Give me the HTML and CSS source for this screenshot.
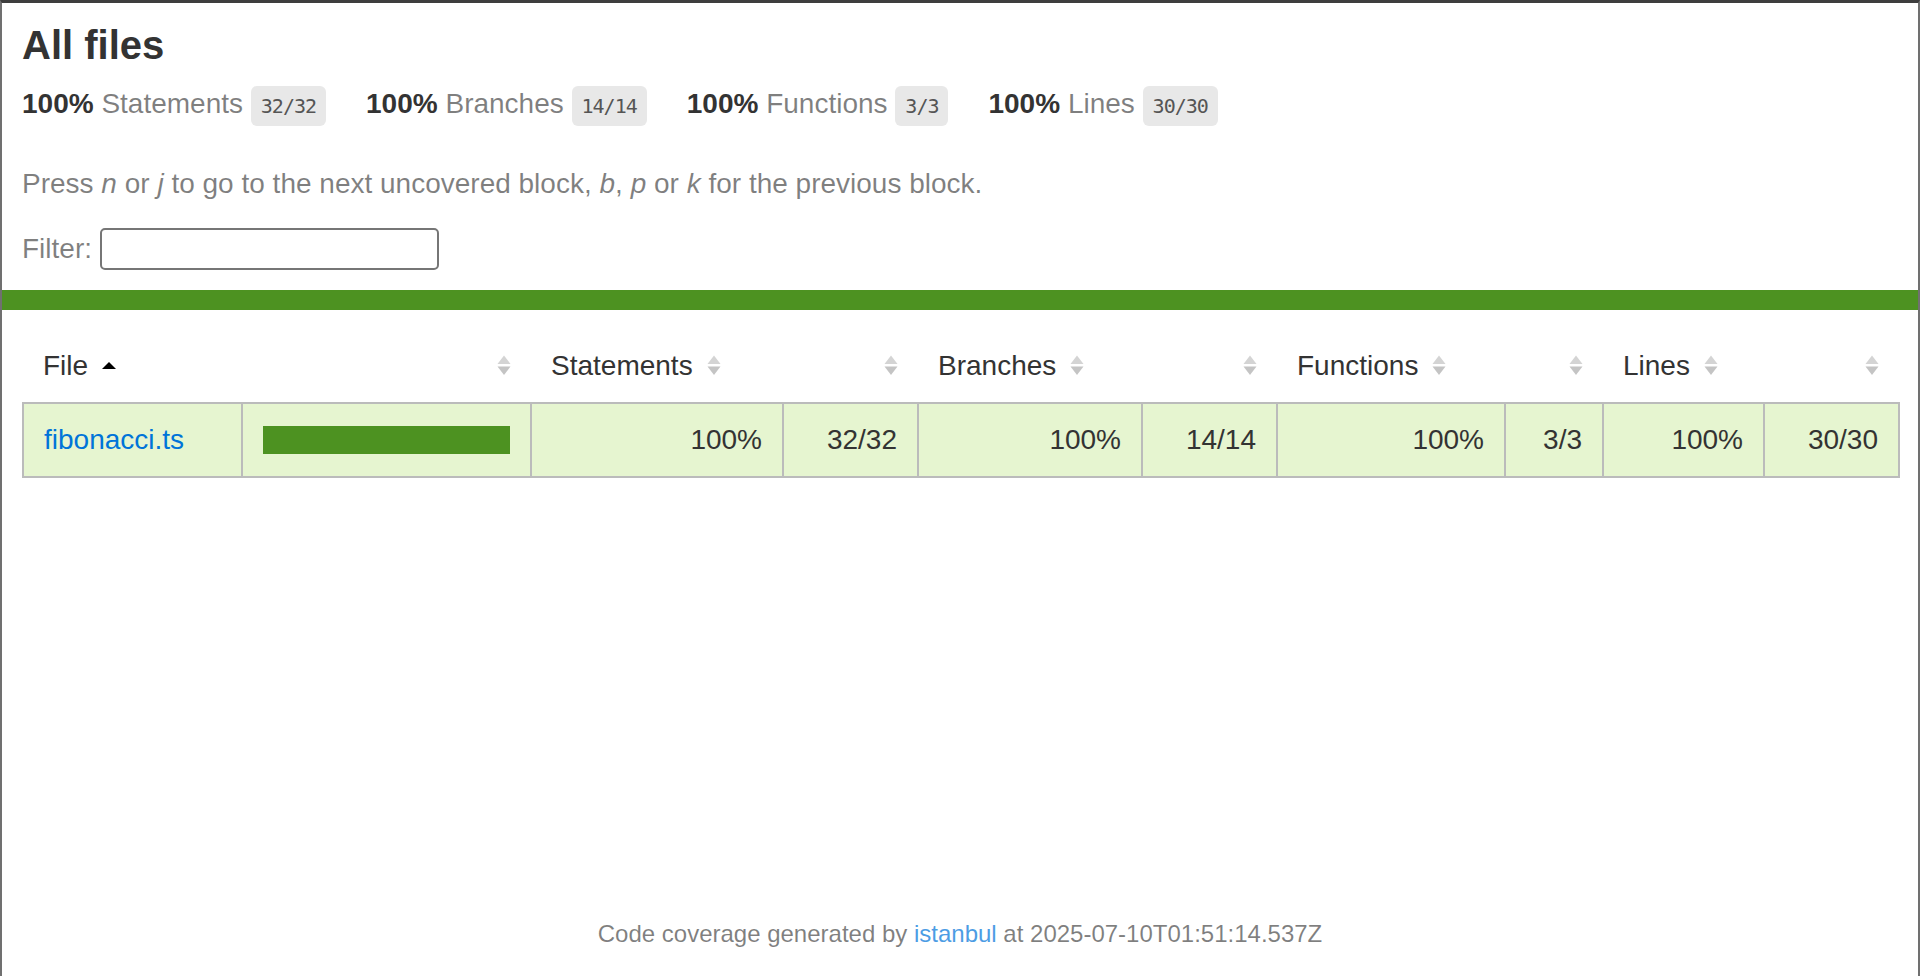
FILE: index.html
```html
<!doctype html>
<html lang="en">
<head>
<meta charset="utf-8">
<title>Code coverage report for All files</title>
<link rel="stylesheet" href="styles.css">
</head>
<body>
<div class="wrapper">
  <div class="pad1">
    <h1>All files</h1>
    <div class="summary">
      <div class="stat"><span class="strong">100% </span><span class="quiet">Statements</span> <span class="fraction">32/32</span></div>
      <div class="stat"><span class="strong">100% </span><span class="quiet">Branches</span> <span class="fraction">14/14</span></div>
      <div class="stat"><span class="strong">100% </span><span class="quiet">Functions</span> <span class="fraction">3/3</span></div>
      <div class="stat"><span class="strong">100% </span><span class="quiet">Lines</span> <span class="fraction">30/30</span></div>
    </div>
    <p class="quiet hint">Press <em>n</em> or <em>j</em> to go to the next uncovered block, <em>b</em>, <em>p</em> or <em>k</em> for the previous block.</p>
    <div class="quiet filter">Filter:<input type="search" class="file-search" aria-label="Filter"></div>
  </div>
  <div class="status-line high"></div>
  <div class="pad1">
    <table class="coverage-summary">
      <colgroup>
        <col class="w-file">
        <col class="w-pic">
        <col class="w-spct">
        <col class="w-abs">
        <col class="w-bpct">
        <col class="w-abs">
        <col class="w-fpct">
        <col class="w-fabs">
        <col class="w-lpct">
        <col class="w-abs">
      </colgroup>
      <thead>
        <tr>
          <th class="file sorted">File<span class="sorter"><svg width="14" height="20" viewBox="0 0 14 20"><polygon points="0,14 7,7 14,14" fill="#000"/></svg></span></th>
          <th class="pic"><span class="sorter"><svg width="14" height="20" viewBox="0 0 14 20"><polygon points="0.5,9 7,0.5 13.5,9" fill="#d4d4d4"/><polygon points="0.5,11.5 13.5,11.5 7,20" fill="#c4c4c4"/></svg></span></th>
          <th class="pct">Statements<span class="sorter"><svg width="14" height="20" viewBox="0 0 14 20"><polygon points="0.5,9 7,0.5 13.5,9" fill="#d4d4d4"/><polygon points="0.5,11.5 13.5,11.5 7,20" fill="#c4c4c4"/></svg></span></th>
          <th class="abs"><span class="sorter"><svg width="14" height="20" viewBox="0 0 14 20"><polygon points="0.5,9 7,0.5 13.5,9" fill="#d4d4d4"/><polygon points="0.5,11.5 13.5,11.5 7,20" fill="#c4c4c4"/></svg></span></th>
          <th class="pct">Branches<span class="sorter"><svg width="14" height="20" viewBox="0 0 14 20"><polygon points="0.5,9 7,0.5 13.5,9" fill="#d4d4d4"/><polygon points="0.5,11.5 13.5,11.5 7,20" fill="#c4c4c4"/></svg></span></th>
          <th class="abs"><span class="sorter"><svg width="14" height="20" viewBox="0 0 14 20"><polygon points="0.5,9 7,0.5 13.5,9" fill="#d4d4d4"/><polygon points="0.5,11.5 13.5,11.5 7,20" fill="#c4c4c4"/></svg></span></th>
          <th class="pct">Functions<span class="sorter"><svg width="14" height="20" viewBox="0 0 14 20"><polygon points="0.5,9 7,0.5 13.5,9" fill="#d4d4d4"/><polygon points="0.5,11.5 13.5,11.5 7,20" fill="#c4c4c4"/></svg></span></th>
          <th class="abs"><span class="sorter"><svg width="14" height="20" viewBox="0 0 14 20"><polygon points="0.5,9 7,0.5 13.5,9" fill="#d4d4d4"/><polygon points="0.5,11.5 13.5,11.5 7,20" fill="#c4c4c4"/></svg></span></th>
          <th class="pct">Lines<span class="sorter"><svg width="14" height="20" viewBox="0 0 14 20"><polygon points="0.5,9 7,0.5 13.5,9" fill="#d4d4d4"/><polygon points="0.5,11.5 13.5,11.5 7,20" fill="#c4c4c4"/></svg></span></th>
          <th class="abs"><span class="sorter"><svg width="14" height="20" viewBox="0 0 14 20"><polygon points="0.5,9 7,0.5 13.5,9" fill="#d4d4d4"/><polygon points="0.5,11.5 13.5,11.5 7,20" fill="#c4c4c4"/></svg></span></th>
        </tr>
      </thead>
      <tbody>
        <tr class="high">
          <td class="file"><a href="#">fibonacci.ts</a></td>
          <td class="pic"><div class="chart"><div class="cover-fill" style="width: 100%"></div></div></td>
          <td class="pct">100%</td>
          <td class="abs">32/32</td>
          <td class="pct">100%</td>
          <td class="abs">14/14</td>
          <td class="pct">100%</td>
          <td class="abs">3/3</td>
          <td class="pct">100%</td>
          <td class="abs">30/30</td>
        </tr>
      </tbody>
    </table>
  </div>
</div>
<div class="footer quiet">Code coverage generated by <a href="#">istanbul</a> at 2025-07-10T01:51:14.537Z</div>
</body>
</html>
```

FILE: styles.css
```css
*, *::before, *::after { box-sizing: border-box; }

html {
  height: 100%;
  margin: 0;
  padding: 0;
}

body {
  height: 100%;
  margin: 0;
  padding: 0;
  display: flex;
  flex-direction: column;
  font-family: "Liberation Sans", Arial, Helvetica, sans-serif;
  font-size: 28px;
  color: #333;
  background: #fff;
  border-top: 3px solid #3e3e3e;
  border-left: 2px solid #707070;
  border-right: 2px solid #707070;
}

a { color: #0074D9; text-decoration: none; }

.wrapper { flex: 1 0 auto; }

.pad1 { padding: 20px; }

h1 {
  font-size: 40px;
  font-weight: bold;
  margin: 0;
}

.summary {
  display: flex;
}

.stat {
  padding: 20px 40px 20px 0;
  white-space: nowrap;
}

.strong { font-weight: bold; }

.quiet { color: rgba(0, 0, 0, 0.5); }
.quiet a { opacity: 0.7; }

.fraction {
  font-family: "DejaVu Sans Mono", "Liberation Mono", monospace;
  font-size: 20px;
  letter-spacing: -1px;
  color: #555;
  background: #e8e8e8;
  padding: 8px 10px;
  border-radius: 6px;
  vertical-align: middle;
}

.hint { margin: 28px 0; }

.filter {
  display: flex;
  align-items: center;
  gap: 8px;
}

.file-search {
  -webkit-appearance: none;
  appearance: none;
  width: 339px;
  height: 42px;
  margin: 0;
  padding: 2px 4px;
  border: 2px solid #767676;
  border-radius: 5px;
  background: #fff;
  font: 26px "Liberation Sans", Arial, sans-serif;
}

.status-line { height: 20px; }
.status-line.high { background: rgb(77, 146, 33); }

.coverage-summary {
  width: 100%;
  table-layout: fixed;
  border-collapse: collapse;
}

.w-file { width: 219px; }
.w-pic { width: 289px; }
.w-spct { width: 252px; }
.w-abs { width: 135px; }
.w-bpct { width: 224px; }
.w-fpct { width: 228px; }
.w-fabs { width: 98px; }
.w-lpct { width: 161px; }

.coverage-summary tr { border-bottom: 2px solid #bbb; }
.coverage-summary tbody { border: 2px solid #bbb; }

.coverage-summary th,
.coverage-summary td {
  padding: 20px;
}

.coverage-summary th {
  text-align: left;
  font-weight: normal;
  white-space: nowrap;
}

.coverage-summary th.pic,
.coverage-summary th.abs,
.coverage-summary td.pct,
.coverage-summary td.abs {
  text-align: right;
}

.coverage-summary td {
  border-right: 2px solid #bbb;
  white-space: nowrap;
}

.coverage-summary td:last-child { border-right: none; }

.sorter {
  display: inline-block;
  width: 14px;
  height: 20px;
  margin-left: 14px;
}

.sorter svg { display: block; }

tr.high td { background: rgb(230, 245, 208); }

.chart {
  display: flex;
  border: 2px solid rgb(77, 146, 33);
}

.cover-fill {
  height: 24px;
  background: rgb(77, 146, 33);
}

.footer {
  flex: 0 0 96px;
  height: 96px;
  min-height: 0;
  padding: 40px 40px 0;
  text-align: center;
  font-size: 24px;
}
```
